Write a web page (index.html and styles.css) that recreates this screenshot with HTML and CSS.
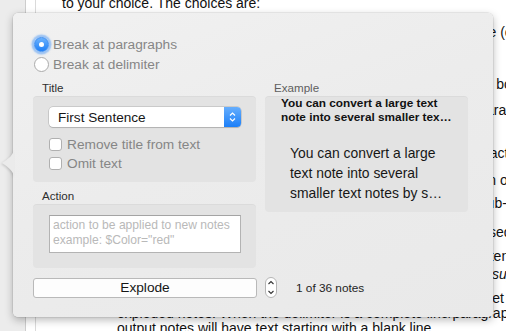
FILE: index.html
```html
<!DOCTYPE html>
<html lang="en">
  <head>
    <meta charset="UTF-8" />
    <title>Explode</title>
    <link rel="stylesheet" href="styles.css">
  </head>
  <body>
    <!-- document behind the popover -->
    <div class="window">
      <div class="gutter"></div>
      <div class="margin"></div>
      <div class="page">
        <div class="line first">to your choice. The choices are:</div>
        <div class="line mt-13">Break at paragraphs: each paragraph becomes its own, separate note (checked by default).</div>
        <div class="line mt-36">Break at delimiter: the note is split whenever the delimiter is found, as bounded by the text.</div>
        <div class="line mt-10">The delimiter may be a character or a string; each part becomes separate notes.</div>
        <div class="line indent mt-27">Paragraph: splits at every line break, saving the text in its exact form.</div>
        <div class="line indent mt-11">Sentence: the note is divided into sentences simply based on one mark.</div>
        <div class="line indent mt-7">Delimiter: splits wherever the given string appears making sub-chunks.</div>
        <div class="line indent mt-13">Blank line: a line containing nothing but whitespace is also used.</div>
        <div class="para tall mt-7">
          <div class="line indent">Custom: enter any characters to split at, such as a short sentence</div>
          <div class="line indent">or some other marker. Note that regular expressions are not <em>supported</em>.</div>
        </div>
        <div class="para tight mt-8">
          <div class="line indent">The original note is left unchanged; the new notes are then set as its children, and the</div>
          <div class="line indent">exploded notes. When the delimiter is a complete line/paragraph, the</div>
          <div class="line indent">output notes will have text starting with a blank line.</div>
        </div>
      </div>
    </div>

    <!-- Explode popover -->
    <div class="popover">
      <svg class="arrow" width="13" height="30" viewBox="0 0 13 30">
        <path d="M13 0 C13 7 7 11 1 15 C7 19 13 23 13 30 Z" fill="#ebebeb" />
      </svg>

      <div class="modes">
        <label class="choice"><span class="radio on"></span>Break at paragraphs</label>
        <label class="choice"><span class="radio"></span>Break at delimiter</label>
      </div>

      <div class="columns">
        <div class="left">
          <div class="caption">Title</div>
          <div class="box title-box">
            <div class="select">
              <span class="select-text">First Sentence</span>
              <span class="select-arrows">
                <svg width="7" height="12" viewBox="0 0 7 12">
                  <path d="M1 4.5 L3.5 2 L6 4.5 M1 7.5 L3.5 10 L6 7.5" fill="none" stroke="#fff" stroke-width="1.2" />
                </svg>
              </span>
            </div>
            <label class="check"><span class="checkbox"></span>Remove title from text</label>
            <label class="check"><span class="checkbox"></span>Omit text</label>
          </div>

          <div class="caption mt-7">Action</div>
          <div class="box action-box">
            <div class="textarea">
              <div class="placeholder">action to be applied to new notes</div>
              <div class="placeholder">example: $Color="red"</div>
            </div>
          </div>
        </div>

        <div class="right">
          <div class="caption grey">Example</div>
          <div class="box example-box">
            <div class="example-title">
              <span>You can convert a large text</span>
              <span>note into several smaller tex…</span>
            </div>
            <div class="example-text">
              <span>You can convert a large</span>
              <span>text note into several</span>
              <span>smaller text notes by s…</span>
            </div>
          </div>
        </div>
      </div>

      <div class="footer">
        <button class="explode">Explode</button>
        <span class="stepper">
          <svg width="12" height="21" viewBox="0 0 12 21">
            <path d="M3.5 7 L6 4.5 L8.5 7 M3.5 14 L6 16.5 L8.5 14" fill="none" stroke="#333" stroke-width="1.1" />
          </svg>
        </span>
        <span class="count">1 of 36 notes</span>
      </div>
    </div>
  </body>
</html>
```

FILE: styles.css
```css
html, body {
  margin: 0;
  padding: 0;
}
body {
  width: 506px;
  height: 331px;
  overflow: hidden;
  position: relative;
  background: #fff;
  font-family: "Liberation Sans", Arial, sans-serif;
}

/* background document */
.window {
  display: flex;
  height: 331px;
}
.gutter {
  width: 25px;
  flex-shrink: 0;
  background: #ececec;
  border-right: 1px solid #cdcdcd;
}
.margin {
  width: 9px;
  flex-shrink: 0;
  background: #fff;
  border-right: 1px solid #dadada;
}
.page {
  flex: 1;
  padding-left: 26px;
  font-size: 14px;
  line-height: 16px;
  color: #111;
  white-space: nowrap;
  overflow: hidden;
}
.line.first {
  margin-top: -5px;
}
.line.indent {
  padding-left: 55px;
}
.para.tall {
  line-height: 18px;
}
.para.tight {
  line-height: 15px;
}
.mt-7 { margin-top: 7px; }
.mt-8 { margin-top: 8px; }
.mt-10 { margin-top: 10px; }
.mt-11 { margin-top: 11px; }
.mt-13 { margin-top: 13px; }
.mt-27 { margin-top: 27px; }
.mt-36 { margin-top: 36px; }

/* popover */
.popover {
  position: absolute;
  left: 13px;
  top: 13px;
  width: 480px;
  height: 304px;
  box-sizing: border-box;
  padding: 21px 25px 20px 20px;
  border-radius: 5px;
  background: linear-gradient(160deg, #f1f1f1 0%, #ececec 45%, #e9e9e9 100%);
  box-shadow: 0 0 0 0.5px rgba(0, 0, 0, 0.12), 0 3px 9px rgba(0, 0, 0, 0.28);
  display: flex;
  flex-direction: column;
}
.arrow {
  position: absolute;
  left: -12px;
  top: 135px;
  filter: drop-shadow(-1px 1px 1px rgba(0, 0, 0, 0.15));
}

.modes {
  display: flex;
  flex-direction: column;
}
.choice {
  height: 20px;
  display: flex;
  align-items: center;
  gap: 4px;
  font-size: 13.7px;
  color: #868686;
}
.radio {
  width: 15px;
  height: 15px;
  margin-left: 1px;
  box-sizing: border-box;
  border-radius: 50%;
  border: 1px solid #ababab;
  background: #fff;
  display: flex;
  align-items: center;
  justify-content: center;
}
.radio.on {
  border-color: #3c8ef3;
  background: linear-gradient(#6cb2fd, #1f80f7);
  box-shadow: 0 0 1.5px 2.5px rgba(84, 157, 245, 0.55);
}
.radio.on::after {
  content: "";
  width: 5px;
  height: 5px;
  border-radius: 50%;
  background: #fff;
}

.columns {
  display: flex;
  gap: 9px;
  margin-top: 7px;
}
.left {
  width: 223px;
  display: flex;
  flex-direction: column;
}
.right {
  width: 203px;
  display: flex;
  flex-direction: column;
}
.caption {
  font-size: 11.6px;
  line-height: 14px;
  color: #2e2e2e;
  padding-left: 9px;
  margin-bottom: 1px;
}
.caption.grey {
  color: #5e5e5e;
}
.box {
  background: #e3e3e3;
  border-radius: 4px;
  box-shadow: inset 0 1px 0 rgba(0, 0, 0, 0.03);
}

.title-box {
  height: 86px;
  box-sizing: border-box;
  padding: 11px 15px 9px 16px;
}
.select {
  height: 20px;
  box-sizing: border-box;
  display: flex;
  align-items: center;
  background: #fff;
  border-radius: 4px;
  box-shadow: 0 0 0 0.5px rgba(0, 0, 0, 0.22), 0 1px 1px rgba(0, 0, 0, 0.12);
  margin-bottom: 8px;
}
.select-text {
  flex: 1;
  padding-left: 9px;
  font-size: 13.6px;
  color: #161616;
}
.select-arrows {
  width: 17px;
  height: 20px;
  border-radius: 0 4px 4px 0;
  background: linear-gradient(#66aefd, #1c7ff8);
  display: flex;
  align-items: center;
  justify-content: center;
}
.check {
  height: 19px;
  display: flex;
  align-items: center;
  gap: 5px;
  font-size: 13.7px;
  color: #868686;
}
.checkbox {
  width: 13px;
  height: 13px;
  box-sizing: border-box;
  border: 1px solid #b0b0b0;
  border-radius: 3px;
  background: #fff;
}

.action-box {
  height: 64px;
  box-sizing: border-box;
  padding: 11px 15px 15px 16px;
}
.textarea {
  height: 38px;
  box-sizing: border-box;
  background: #fff;
  border: 1px solid #b3b3b3;
  border-top-color: #a4a4a4;
  padding: 2px 0 0 3px;
}
.placeholder {
  font-size: 12.1px;
  line-height: 15px;
  color: #b9b9b9;
  white-space: nowrap;
}

.example-box {
  height: 116px;
  box-sizing: border-box;
  padding: 0 10px 0 16px;
}
.example-title {
  display: flex;
  flex-direction: column;
  font-size: 11.8px;
  line-height: 14px;
  font-weight: bold;
  color: #111;
  white-space: nowrap;
}
.example-text {
  display: flex;
  flex-direction: column;
  margin-top: 19px;
  padding-left: 9px;
  font-size: 13.9px;
  line-height: 20px;
  color: #161616;
  white-space: nowrap;
}

.footer {
  display: flex;
  align-items: center;
  margin-top: 9px;
}
.explode {
  width: 224px;
  height: 20px;
  margin: 0;
  padding: 0;
  border: 1px solid #b9b9b9;
  border-radius: 3px;
  background: #fdfdfd;
  font-family: inherit;
  font-size: 13.7px;
  color: #161616;
}
.stepper {
  width: 12px;
  height: 21px;
  margin-left: 8px;
  box-sizing: border-box;
  border: 1px solid #b5b5b5;
  border-radius: 6px;
  background: #fff;
  display: flex;
  align-items: center;
  justify-content: center;
}
.stepper svg {
  flex-shrink: 0;
}
.count {
  margin-left: 19px;
  font-size: 11.8px;
  color: #1e1e1e;
}
```
